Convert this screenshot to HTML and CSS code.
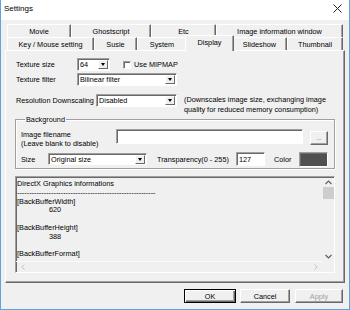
FILE: index.html
```html
<!DOCTYPE html>
<html>
<head>
<meta charset="utf-8">
<link rel="stylesheet" href="styles.css">
</head>
<body>
<div class="window">
  <div class="titlebar">
    <span class="title">Settings</span>
    <svg class="close" width="9" height="9" viewBox="0 0 9 9"><path d="M0.5 0.5 L8.5 8.5 M8.5 0.5 L0.5 8.5" stroke="#222" stroke-width="1" fill="none"/></svg>
  </div>
  <div class="tabs">
    <div class="tabrow">
      <div class="tab w64">Movie</div>
      <div class="tab w80">Ghostscript</div>
      <div class="tab w65">Etc</div>
      <div class="tab w127">Image information window</div>
    </div>
    <div class="tabrow">
      <div class="tab w87">Key / Mouse setting</div>
      <div class="tab w43">Susie</div>
      <div class="tab w50">System</div>
      <div class="tab sel">Display</div>
      <div class="tab w55">Slideshow</div>
      <div class="tab w56">Thumbnail</div>
    </div>
  </div>
  <div class="panel">
    <div class="row rowA">
      <span class="lbl l61">Texture size</span>
      <div class="combo c33"><span class="val">64</span><span class="dd"><i></i></span></div>
      <span class="check"></span><span class="chklbl">Use MIPMAP</span>
    </div>
    <div class="row rowB">
      <span class="lbl l61">Texture filter</span>
      <div class="combo c100"><span class="val">Bilinear filter</span><span class="dd"><i></i></span></div>
    </div>
    <div class="row rowC">
      <span class="lbl l80 lblC">Resolution Downscaling</span>
      <div class="combo c81"><span class="val">Disabled</span><span class="dd"><i></i></span></div>
      <div class="note">(Downscales image size, exchanging image<br>quality for reduced memory consumption)</div>
    </div>
    <fieldset class="group">
      <legend>Background</legend>
      <div class="grow g1">
        <span class="lbl2">Image filename<br>(Leave blank to disable)</span>
        <span class="field f187"></span>
        <span class="btn dots">...</span>
      </div>
      <div class="grow g2">
        <span class="lbl l27">Size</span>
        <div class="combo c99"><span class="val">Original size</span><span class="dd"><i></i></span></div>
        <span class="lbl l79">Transparency(0 - 255)</span>
        <span class="field f29"><span class="val">127</span></span>
        <span class="lbl l25">Color</span>
        <span class="swatch"></span>
      </div>
    </fieldset>
    <div class="log">
      <div class="logtext">
        <div>DirectX Graphics informations</div>
        <div>---------------------------------------------------------</div>
        <div>[BackBufferWidth]</div>
        <div class="ind">620</div>
        <div>&nbsp;</div>
        <div>[BackBufferHeight]</div>
        <div class="ind">388</div>
        <div>&nbsp;</div>
        <div>[BackBufferFormat]</div>
      </div>
      <div class="vscroll">
        <svg width="7" height="5" viewBox="0 0 7 5"><path d="M0.5 4 L3.5 1 L6.5 4" stroke="#606060" stroke-width="1.2" fill="none"/></svg>
        <div class="thumb"></div>
        <div class="vfill"></div>
        <svg width="7" height="5" viewBox="0 0 7 5"><path d="M0.5 1 L3.5 4 L6.5 1" stroke="#606060" stroke-width="1.2" fill="none"/></svg>
      </div>
      <div class="hscroll">
        <svg width="4" height="6" viewBox="0 0 4 6"><path d="M3.5 0.5 L0.8 3 L3.5 5.5" stroke="#c4c4c4" stroke-width="1" fill="none"/></svg>
        <svg width="4" height="6" viewBox="0 0 4 6"><path d="M0.5 0.5 L3.2 3 L0.5 5.5" stroke="#c4c4c4" stroke-width="1" fill="none"/></svg>
      </div>
      <div class="corner"></div>
    </div>
  </div>
  <div class="buttons">
    <span class="btn ok">OK</span>
    <span class="btn cancel">Cancel</span>
    <span class="btn apply">Apply</span>
  </div>
</div>
</body>
</html>
```
FILE: styles.css
```css
html, body { margin: 0; padding: 0; background: #fff; }
body {
  font-family: "Liberation Sans", Arial, sans-serif;
  font-size: 7.3px;
  color: #000;
}
.window {
  width: 350px;
  height: 310px;
  box-sizing: border-box;
  border: 1px solid #5fa3e3;
  border-top: none;
  background: #f0f0f0;
  display: flex;
  flex-direction: column;
}
.titlebar {
  height: 20px;
  background: #fff;
  display: flex;
  justify-content: space-between;
  align-items: flex-start;
  padding: 4px 7px 0 3px;
  box-sizing: border-box;
  flex: none;
}
.title { font-size: 8px; line-height: 9px; }

/* tabs */
.tabs { margin: 4px 0 0 6px; width: 336px; flex: none; }
.tabrow { display: flex; height: 13px; }
.tab {
  box-sizing: border-box;
  height: 13px;
  border-top: 1px solid #fff;
  border-left: 1px solid #fff;
  border-right: 1px solid #696969;
  box-shadow: inset -1px 0 #a0a0a0;
  border-radius: 1px 1px 0 0;
  display: flex;
  align-items: center;
  justify-content: center;
  white-space: nowrap;
  flex: none;
  padding-top: 1px;
}
.w64 { width: 64px; } .w80 { width: 80px; } .w65 { width: 65px; } .w127 { width: 127px; }
.w87 { width: 87px; } .w43 { width: 43px; } .w50 { width: 50px; } .w55 { width: 55px; } .w56 { width: 56px; }
.tab.sel {
  width: 49px;
  height: 16px;
  margin: -2px -2px 0 -2px;
  position: relative;
  z-index: 1;
  background: #f0f0f0;
  padding-bottom: 3px;
}

/* panel */
.panel {
  margin-left: 4px;
  width: 340px;
  height: 233px;
  box-sizing: border-box;
  border: 1px solid;
  border-color: #fff #696969 #696969 #fff;
  box-shadow: inset -1px -1px #a0a0a0;
  padding: 0 9px;
  display: flex;
  flex-direction: column;
  flex: none;
}
.row { display: flex; align-items: center; padding-left: 1px; }
.rowA { margin-top: 7px; height: 13px; }
.rowB { margin-top: 2px; height: 13px; }
.rowC { margin-top: 7px; align-items: flex-start; }
.lbl { white-space: nowrap; flex: none; }
.lblC { margin-top: 3px; }
.l61 { width: 61px; } .l80 { width: 80px; } .l27 { width: 27px; } .l79 { width: 79px; } .l25 { width: 25px; }

.combo {
  box-sizing: border-box;
  height: 13px;
  background: #fff;
  border: 1px solid;
  border-color: #a0a0a0 #fff #fff #a0a0a0;
  box-shadow: inset 1px 1px #696969;
  display: flex;
  align-items: center;
  justify-content: space-between;
  flex: none;
}
.combo .val { padding-left: 2px; white-space: nowrap; }
.dd {
  width: 10px;
  height: 9px;
  margin-right: 1px;
  box-sizing: border-box;
  background: #f0f0f0;
  border: 1px solid;
  border-color: #fff #696969 #696969 #fff;
  display: flex;
  align-items: center;
  justify-content: center;
}
.dd i {
  display: block;
  width: 0; height: 0;
  border-left: 2.5px solid transparent;
  border-right: 2.5px solid transparent;
  border-top: 3px solid #000;
}
.c33 { width: 33px; }
.c100 { width: 100px; }
.c81 { width: 81px; margin-top: 1px; }
.c99 { width: 99px; height: 12px; margin-right: 10px; }

.check {
  width: 8px; height: 8px;
  box-sizing: border-box;
  margin-left: 13px;
  background: #fff;
  border: 1px solid;
  border-color: #a0a0a0 #fff #fff #a0a0a0;
  box-shadow: inset 1px 1px #696969;
  flex: none;
}
.chklbl { margin-left: 3px; white-space: nowrap; }
.note { margin-left: 7px; line-height: 10px; margin-top: 2px; white-space: nowrap; }

/* group */
.group {
  margin: 0;
  padding: 0 5px 1px 5px;
  min-width: 0;
  border: 1px solid #a0a0a0;
  box-shadow: 1px 1px #fff, inset 1px 1px #fff;
  border-radius: 0;
}
.group legend {
  padding: 0 1px;
  margin-left: 4px;
  line-height: 9px;
}
.grow { display: flex; align-items: center; }
.g1 { margin-top: 5px; align-items: flex-start; }
.lbl2 { width: 95px; line-height: 9px; white-space: nowrap; flex: none; padding-top: 1px; }
.field {
  box-sizing: border-box;
  background: #fff;
  border: 1px solid;
  border-color: #a0a0a0 #fff #fff #a0a0a0;
  box-shadow: inset 1px 1px #696969;
  display: flex;
  align-items: center;
  flex: none;
}
.field .val { padding-left: 2px; }
.f187 { width: 187px; height: 15px; }
.f29 { width: 29px; height: 14px; }
.btn {
  box-sizing: border-box;
  background: #f0f0f0;
  border: 1px solid;
  border-color: #fff #696969 #696969 #fff;
  box-shadow: inset -1px -1px #a0a0a0;
  display: flex;
  align-items: center;
  justify-content: center;
  flex: none;
}
.dots { width: 18px; height: 14px; margin: 2px 0 0 7px; font-size: 6px; color: #333; }
.g2 { margin-top: 3px; height: 16px; }
.l25 { margin-left: 9px; }
.swatch {
  width: 29px; height: 15px;
  box-sizing: border-box;
  background: #505050;
  border: 1px solid;
  border-color: #a0a0a0 #fff #fff #a0a0a0;
  box-shadow: inset 1px 1px #696969;
  flex: none;
}

/* log */
.log {
  margin-top: 7px;
  height: 97px;
  box-sizing: border-box;
  border: 1px solid;
  border-color: #a0a0a0 #fff #fff #a0a0a0;
  box-shadow: inset 1px 1px #696969;
  display: grid;
  grid-template-columns: 1fr 12px;
  grid-template-rows: 1fr 11px;
}
.logtext {
  padding: 3px 0 0 1px;
  line-height: 8.8px;
  white-space: nowrap;
  overflow: hidden;
}
.ind { padding-left: 32px; }
.vscroll {
  display: flex;
  flex-direction: column;
  align-items: center;
  padding-top: 3px;
  padding-bottom: 2px;
}
.thumb { width: 11px; height: 12px; background: #cdcdcd; margin-top: 2px; }
.vfill { flex: 1; }
.hscroll {
  border-top: 1px solid #fbfbfb;
  display: flex;
  align-items: center;
  justify-content: space-between;
  padding: 0 4px 0 5px;
}
.corner { background: #f0f0f0; }

/* buttons */
.buttons {
  display: flex;
  justify-content: flex-end;
  margin-top: 6px;
  padding-right: 6px;
  height: 14px;
  flex: none;
}
.ok { width: 52px; height: 14px; border: 1px solid #000; box-shadow: inset 1px 1px #fff, inset -1px -1px #696969, inset -2px -2px #a0a0a0; }
.cancel { width: 50px; height: 14px; margin-left: 4px; }
.apply { width: 48px; height: 14px; margin-left: 5px; color: #a0a0a0; }
```
